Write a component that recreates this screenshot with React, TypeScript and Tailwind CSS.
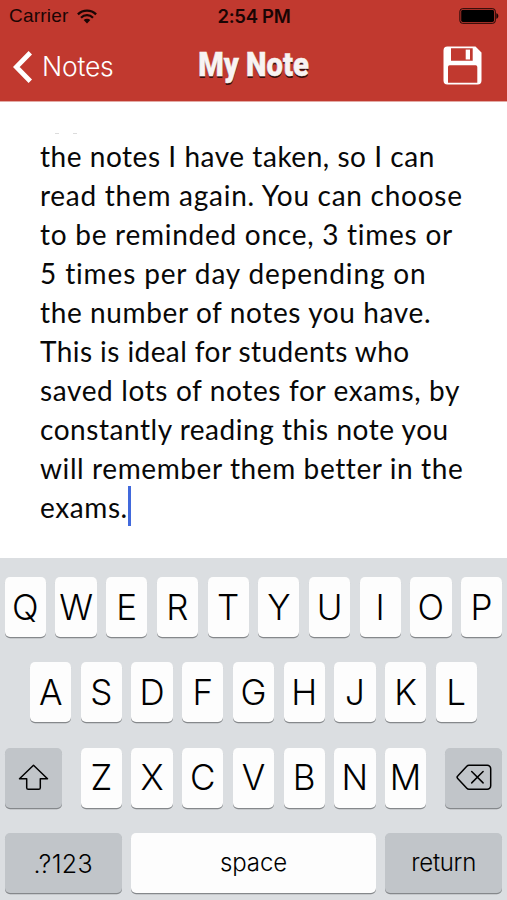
import type { ReactNode } from "react";

const noteLines = [
  { text: "the notes I have taken, so I can", tracking: "tracking-[0.54px]" },
  { text: "read them again. You can choose", tracking: "tracking-[0.73px]" },
  { text: "to be reminded once, 3 times or", tracking: "tracking-[0.74px]" },
  { text: "5 times per day depending on", tracking: "tracking-[0.86px]" },
  { text: "the number of notes you have.", tracking: "tracking-[0.62px]" },
  { text: "This is ideal for students who", tracking: "tracking-[0.43px]" },
  { text: "saved lots of notes for exams, by", tracking: "tracking-[0.63px]" },
  { text: "constantly reading this note you", tracking: "tracking-[0.54px]" },
  { text: "will remember them better in the", tracking: "tracking-[0.6px]" },
  { text: "exams.", tracking: "tracking-[0.6px]" },
];

function Key({ children, className }: { children: ReactNode; className: string }) {
  return (
    <div
      className={`flex h-[60px] shrink-0 items-center justify-center rounded-[5px] shadow-[0_1.3px_0_#85888b] ${className}`}
    >
      {children}
    </div>
  );
}

function LetterKeys({ letters }: { letters: string }) {
  return (
    <div className="flex gap-[9.4px]">
      {letters.split("").map((letter) => (
        <Key key={letter} className="w-[41.3px] bg-[#fdfdfd] text-[35px] leading-none">
          {letter}
        </Key>
      ))}
    </div>
  );
}

function StatusBar() {
  return (
    <div className="flex h-8 items-center justify-between pl-[9px] pr-[8px] font-['Liberation_Sans',sans-serif] text-[19px] leading-8 text-[#1a0504]">
      <div className="flex w-[150px] items-center gap-[9px]">
        <span className="tracking-[0.2px]">Carrier</span>
        <svg width="20" height="15" viewBox="0 0 20 15" fill="none" stroke="currentColor" strokeWidth="2.3">
          <path d="M0.9 5.4a12.9 12.9 0 0 1 18.2 0" />
          <path d="M4 8.7a8.5 8.5 0 0 1 12 0" />
          <path d="M10 14.4 6.7 11.1a4.7 4.7 0 0 1 6.6 0Z" fill="currentColor" stroke="none" />
        </svg>
      </div>
      <span className="font-[Inter,sans-serif] text-[18.5px] font-semibold tracking-[-0.3px]">2:54 PM</span>
      <div className="flex w-[150px] justify-end">
        <svg width="40" height="16" viewBox="0 0 40 16">
          <rect x="0.9" y="0.7" width="35.4" height="14.6" rx="2.6" fill="none" stroke="#1a0504" strokeWidth="1" />
          <rect x="2.2" y="2" width="32.8" height="12" rx="1.4" fill="#000" />
          <path d="M37.3 5.2c1.3.3 2 1.4 2 2.8s-.7 2.5-2 2.8Z" fill="#1a0504" />
        </svg>
      </div>
    </div>
  );
}

function NavBar() {
  return (
    <div className="flex h-[69px] items-center justify-between pl-[13px] pr-[25px] text-white">
      <div className="flex w-[120px] items-center gap-[9px]">
        <svg width="20" height="32" viewBox="0 0 20 32" fill="none" stroke="currentColor" strokeWidth="4.8">
          <path d="M17.3 1.8 3.3 16l14 14.2" />
        </svg>
        <span className="pb-px font-[Inter,sans-serif] text-[26.5px] font-light leading-8 tracking-[-0.2px]">
          Notes
        </span>
      </div>
      <div className="mr-[-12px] w-[129px] scale-x-[0.87] whitespace-nowrap pb-[4px] text-center font-[Roboto,sans-serif] text-[33.5px] font-black leading-8 text-[#f8f3f2] [-webkit-text-stroke:0.5px_#f8f3f2] [text-shadow:0_1.5px_0.5px_#3a100c]">
        My Note
      </div>
      <div className="flex w-[120px] justify-end pb-[3px]">
        <svg width="39" height="39" viewBox="0 0 39 39">
          <path
            fill="currentColor"
            fillRule="evenodd"
            d="M4.5.5h28L38.5 6.5V34.5a4 4 0 0 1-4 4H4.5a4 4 0 0 1-4-4V4.5a4 4 0 0 1 4-4ZM8 2.3V14.7H29.7V2.3ZM6.6 19.3a1.6 1.6 0 0 0-1.6 1.6V36.7H34.3V20.9a1.6 1.6 0 0 0-1.6-1.6Z"
          />
          <path fill="currentColor" d="M22.7 3.6h4.3v9.9h-4.3z" />
        </svg>
      </div>
    </div>
  );
}

export default function App() {
  return (
    <div className="flex h-[900px] w-[507px] flex-col overflow-hidden bg-white">
      <header className="h-[101px] shrink-0 bg-[#c1392f] shadow-[0_1px_0_#e3aaa5]">
        <StatusBar />
        <NavBar />
      </header>

      <main className="h-[457px] shrink-0 pl-10 pt-8 font-[Lato,sans-serif] text-[28px] leading-[39px] text-[#080808]">
        <div className="flex h-[4px] gap-[14px] pl-[15px]">
          <span className="h-px w-[4px] bg-[#dcdcdc]" />
          <span className="h-px w-[4px] bg-[#dcdcdc]" />
        </div>
        {noteLines.map(({ text, tracking }, i) => (
          <div key={text} className="flex h-[39px] whitespace-nowrap">
            <span className={tracking}>{text}</span>
            {i === noteLines.length - 1 && <span className="-mt-[2px] h-[40px] w-[3px] shrink-0 bg-[#4169dc]" />}
          </div>
        ))}
      </main>

      <section className="flex h-[342px] flex-col items-center gap-[25.4px] bg-[#dbdee1] pt-[19px] font-[Inter,sans-serif] font-light text-black">
        <LetterKeys letters="QWERTYUIOP" />
        <LetterKeys letters="ASDFGHJKL" />
        <div className="flex w-[497.4px] justify-between">
          <Key className="w-[57px] bg-[#c1c5c9]">
            <svg width="31" height="27" viewBox="0 0 31 27" fill="none" stroke="currentColor" strokeWidth="1.5" strokeLinejoin="round">
              <path d="M15.5 1.3 1.5 14.7H8.7V23.7a1.6 1.6 0 0 0 1.6 1.6H20.7a1.6 1.6 0 0 0 1.6-1.6V14.7H29.5Z" />
            </svg>
          </Key>
          <LetterKeys letters="ZXCVBNM" />
          <Key className="w-[57px] bg-[#c1c5c9]">
            <svg width="36" height="27" viewBox="0 0 36 27" fill="none" stroke="currentColor" strokeWidth="1.5" strokeLinecap="round" strokeLinejoin="round">
              <path d="M13 1.3H31.2a3.5 3.5 0 0 1 3.5 3.5V21.8a3.5 3.5 0 0 1-3.5 3.5H13a3 3 0 0 1-2.2-1L1.7 14.500a1.7 1.7 0 0 1 0-2.400L10.8 2.300a3 3 0 0 1 2.200-1Z" />
              <path d="m15.700 7.500 11.400 11.400M27.100 7.500 15.700 18.900" />
            </svg>
          </Key>
        </div>
        <div className="flex w-[497.4px] justify-between">
          <Key className="w-[117px] bg-[#c1c5c9] pt-[3px] text-[25px] tracking-[0.4px]">.?123</Key>
          <Key className="w-[244.5px] bg-[#fdfdfd] pb-px text-[24px] tracking-[-0.1px]">space</Key>
          <Key className="w-[117px] bg-[#c1c5c9] pb-px text-[24px] tracking-[-0.3px]">return</Key>
        </div>
      </section>
    </div>
  );
}
